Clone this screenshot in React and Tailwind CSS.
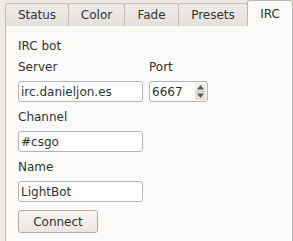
import React from 'react';

const tabs = [
  { label: 'Status', w: 'w-[64px]' },
  { label: 'Color', w: 'w-[57px]' },
  { label: 'Fade', w: 'w-[55px]' },
  { label: 'Presets', w: 'w-[70px]' },
];

const Field = ({ value, className = '' }) => (
  <div
    className={`h-[21px] flex items-center px-[2px] bg-white border border-[#b9b4af] rounded-[3px] text-[12px] text-[#2e3436] ${className}`}
  >
    {value}
  </div>
);

const Label = ({ children, className = '' }) => (
  <div className={`h-[14px] leading-[14px] text-[12px] text-[#2e3436] ${className}`}>{children}</div>
);

const App = () => {
  return (
    <div
      className="w-[293px] h-[241px] overflow-hidden bg-[#edeae6] relative"
      style={{ fontFamily: '"DejaVu Sans", sans-serif' }}
    >
      {/* Tab bar */}
      <div className="flex items-end pl-[5px] h-[26px] relative z-10">
        {tabs.map((t) => (
          <div
            key={t.label}
            className={`${t.w} h-[23px] -mr-px flex items-center justify-center text-[12px] text-[#2e3436] bg-gradient-to-b from-[#eeebe8] to-[#e4e0dc] border border-[#c2bdb8] border-b-0 rounded-t-[3px]`}
          >
            {t.label}
          </div>
        ))}
        <div className="w-[46px] h-[26px] flex items-center justify-center text-[12px] text-[#2e3436] bg-[#fcfaf8] border border-[#bcb7b2] border-b-0 rounded-t-[3px]">
          IRC
        </div>
      </div>

      {/* Pane */}
      <div className="ml-[5px] w-[288px] h-[230px] -mt-px bg-[#fcfaf8] border border-[#bcb7b2] pl-[12px] pt-[13px]">
        <Label>IRC bot</Label>
        <div className="flex gap-[6px] mt-[7px]">
          <div className="flex flex-col">
            <Label>Server</Label>
            <Field value="irc.danieljon.es" className="w-[125px] mt-[7px]" />
          </div>
          <div className="flex flex-col">
            <Label>Port</Label>
            <div className="w-[59px] h-[21px] mt-[7px] flex items-center bg-white border border-[#b9b4af] rounded-[3px] text-[12px] text-[#2e3436]">
              <span className="pl-[2px] flex-1">6667</span>
              <div className="w-[11px] h-[17px] flex flex-col items-center justify-center mr-[1px] bg-gradient-to-b from-[#f2efec] to-[#e2deda] rounded-[2px]">
                <svg width="9" height="7" viewBox="0 0 9 7">
                  <path d="M4.5 1 L8 5.5 L1 5.5 Z" fill="#55595b" />
                </svg>
                <div className="w-[9px] h-px bg-[#c4c0bc]" />
                <svg width="9" height="7" viewBox="0 0 9 7">
                  <path d="M1 1.5 L8 1.5 L4.5 6 Z" fill="#55595b" />
                </svg>
              </div>
            </div>
          </div>
        </div>
        <Label className="mt-[8px]">Channel</Label>
        <Field value="#csgo" className="w-[125px] mt-[7px]" />
        <Label className="mt-[8px]">Name</Label>
        <Field value="LightBot" className="w-[125px] mt-[7px]" />
        <button className="mt-[8px] w-[80px] h-[23px] flex items-center justify-center text-[12px] text-[#2e3436] bg-gradient-to-b from-[#f8f6f4] to-[#e9e6e2] border border-[#b3aea9] rounded-[3px]">
          Connect
        </button>
      </div>
    </div>
  );
};

export default App;
